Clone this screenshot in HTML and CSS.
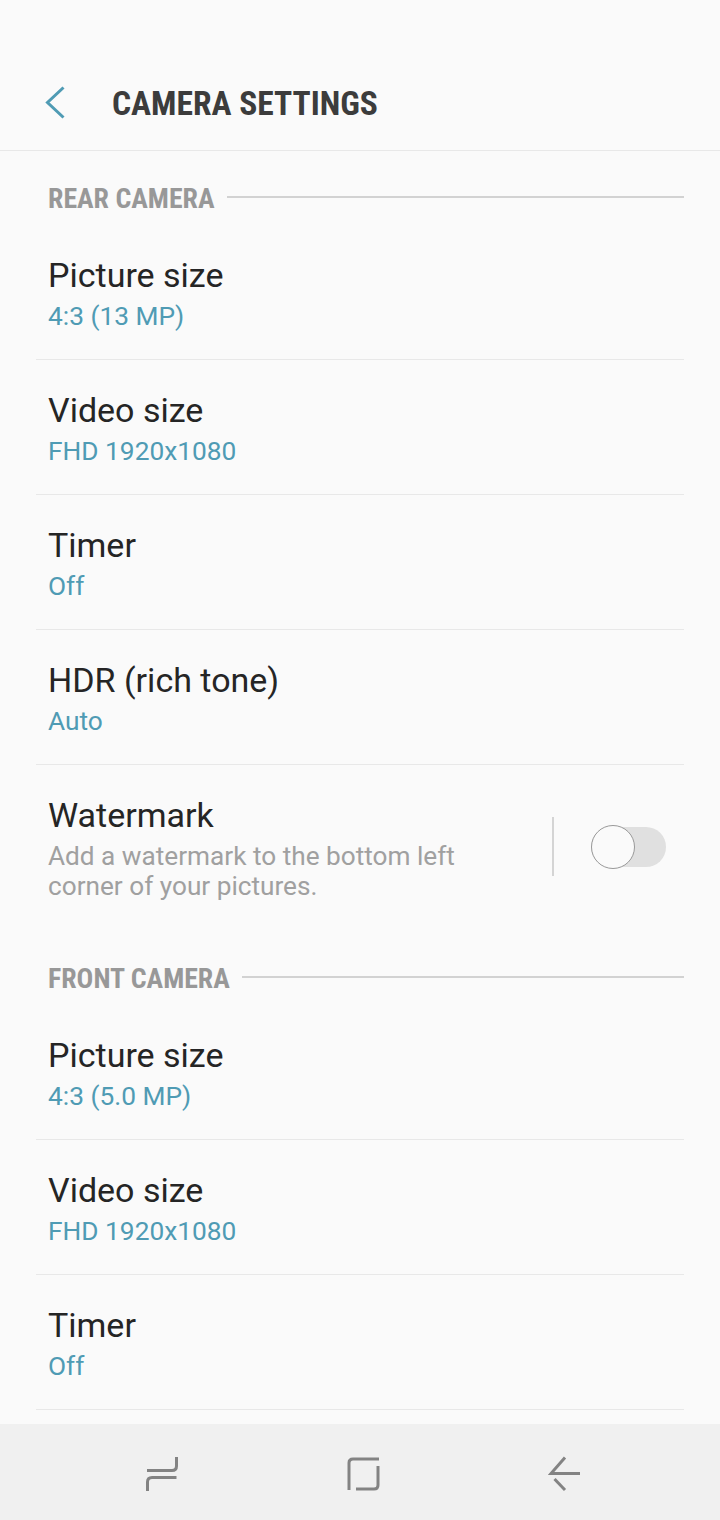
FILE: index.html
```html
<!DOCTYPE html>
<html lang="en">
<head>
  <meta charset="UTF-8">
  <title>Camera settings</title>
  <link rel="stylesheet" href="styles.css">
</head>
<body>

  <header class="topbar">
    <svg class="back" width="24" height="34" viewBox="0 0 24 34">
      <path d="M19.5 1.5 L3.5 16.5 L19.5 31.5" fill="none" stroke="#4f9bb4" stroke-width="3"/>
    </svg>
    <h1>CAMERA SETTINGS</h1>
  </header>

  <main class="content">
    <div class="section-head"><span>REAR CAMERA</span></div>
    <div class="row">
      <div class="row-title">Picture size</div>
      <div class="row-value">4:3 (13 MP)</div>
    </div>
    <div class="row">
      <div class="row-title">Video size</div>
      <div class="row-value">FHD 1920x1080</div>
    </div>
    <div class="row">
      <div class="row-title">Timer</div>
      <div class="row-value">Off</div>
    </div>
    <div class="row">
      <div class="row-title">HDR (rich tone)</div>
      <div class="row-value">Auto</div>
    </div>
    <div class="row row-switch">
      <div class="row-text">
        <div class="row-title">Watermark</div>
        <div class="row-desc">Add a watermark to the bottom left corner of your pictures.</div>
      </div>
      <div class="switch-sep"></div>
      <div class="switch"><div class="knob"></div></div>
    </div>

    <div class="section-head"><span>FRONT CAMERA</span></div>
    <div class="row">
      <div class="row-title">Picture size</div>
      <div class="row-value">4:3 (5.0 MP)</div>
    </div>
    <div class="row">
      <div class="row-title">Video size</div>
      <div class="row-value">FHD 1920x1080</div>
    </div>
    <div class="row">
      <div class="row-title">Timer</div>
      <div class="row-value">Off</div>
    </div>
  </main>

  <nav class="navbar">
    <svg width="34" height="36" viewBox="0 0 34 36" fill="none" stroke="#838383" stroke-width="3">
      <path d="M1 14.5 H26 Q30.5 14.5 30.5 10 V1"/>
      <path d="M30.5 21.5 H6 Q1.5 21.5 1.5 26 V35"/>
    </svg>
    <svg width="34" height="36" viewBox="0 0 34 36" fill="none" stroke="#838383" stroke-width="3">
      <path d="M2 34 V7 Q2 3 6 3 H32"/>
      <path d="M9 33 H27 Q31 33 31 29 V10"/>
    </svg>
    <svg width="34" height="36" viewBox="0 0 34 36" fill="none" stroke="#838383" stroke-width="3">
      <path d="M17 1.5 L3 17.5 H32"/>
      <path d="M6.5 23 L17 34"/>
    </svg>
  </nav>

</body>
</html>
```

FILE: styles.css
```css
* {
  box-sizing: border-box;
}

html, body {
  margin: 0;
  height: 1520px;
  overflow: hidden;
}

body {
  display: flex;
  flex-direction: column;
  font-family: Roboto, "Liberation Sans", sans-serif;
  background-color: #fafafa;
  color: #252525;
}

.topbar {
  display: flex;
  align-items: center;
  height: 151px;
  padding: 56px 0 0 44px;
  border-bottom: 1px solid #e8e8e8;
}

.topbar h1 {
  margin: 0 0 0 44px;
  font-size: 33.5px;
  font-weight: 700;
  font-stretch: 75%;
  color: #3c3c3c;
}

.content {
  flex: 1;
  overflow: hidden;
}

.section-head {
  display: flex;
  align-items: center;
  height: 74px;
  padding: 20px 36px 0 48px;
  font-size: 27.8px;
  font-weight: 700;
  font-stretch: 75%;
  color: #989898;
}

.section-head::after {
  content: "";
  flex: 1;
  height: 2px;
  margin: 0 0 2px 12.5px;
  background-color: #d2d2d2;
}

.row {
  height: 135px;
  margin: 0 36px;
  padding: 30px 12px 0;
  border-bottom: 1px solid #e8e8e8;
}

.row-title {
  font-size: 34px;
  line-height: 40px;
}

.row-value {
  margin-top: 1px;
  font-size: 26.3px;
  line-height: 40px;
  color: #4f9bb4;
}

.row-switch {
  display: flex;
  height: 166px;
  border-bottom: none;
}

.row-text {
  width: 440px;
}

.row-desc {
  font-size: 26.2px;
  line-height: 30px;
  margin-top: 6px;
  color: #a0a0a0;
}

.switch-sep {
  width: 2px;
  height: 59px;
  margin: 22px 0 0 64px;
  background-color: #d4d4d4;
}

.switch {
  width: 75px;
  height: 40px;
  margin: 32px 0 0 37px;
  border-radius: 20px;
  background-color: #e0e0e0;
  position: relative;
}

.knob {
  position: absolute;
  left: 0;
  top: -2px;
  width: 44px;
  height: 44px;
  border: 1px solid #999;
  border-radius: 50%;
  background-color: #fafafa;
}

.navbar {
  display: flex;
  align-items: center;
  justify-content: space-between;
  height: 96px;
  padding: 3px 138px 0 146px;
  background-color: #f0f0f0;
}
```
